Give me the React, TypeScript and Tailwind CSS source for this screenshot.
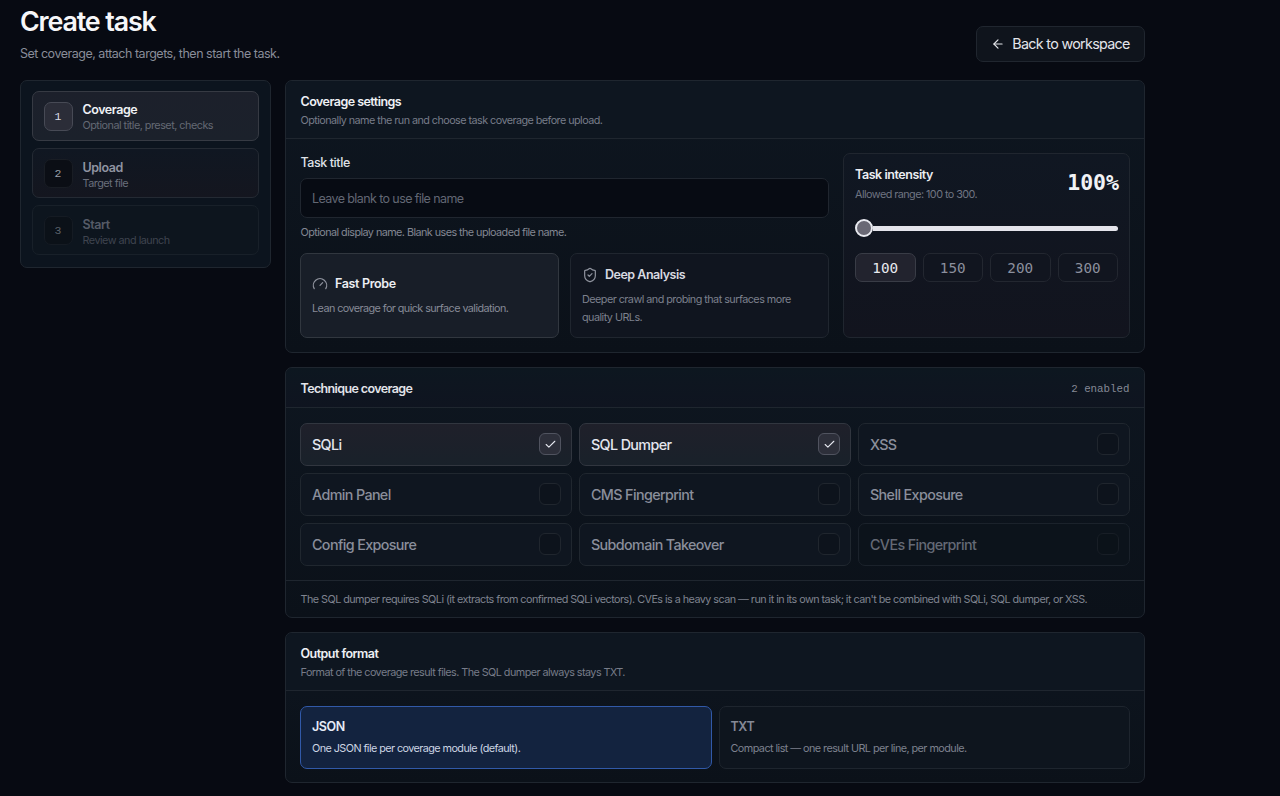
import { ArrowLeft, Check, Gauge, ShieldCheck } from "lucide-react";
import type { ReactNode } from "react";

const steps = [
  {
    n: 1,
    title: "Coverage",
    hint: "Optional title, preset, checks",
    box: "h-[50px] border-[#363a43] bg-linear-to-b from-[#1c202b] to-[#1b212b]",
    badge: "border-[#474a55] bg-[#2b2d38] text-[#d9dbe3]",
    titleColor: "text-[#eff1f5]",
    hintColor: "text-[#646974]",
  },
  {
    n: 2,
    title: "Upload",
    hint: "Target file",
    box: "h-[50px] border-[#242a33] bg-linear-to-b from-[#101722] to-[#14161f] pt-px",
    badge: "border-[#191d24] bg-[#0b0e15] text-[#9a9ea8]",
    titleColor: "text-[#9094a1]",
    hintColor: "text-[#6a6f7c]",
  },
  {
    n: 3,
    title: "Start",
    hint: "Review and launch",
    box: "h-[50px] border-[#182029] bg-[#0d151e] pt-px",
    badge: "border-[#151b23] bg-[#0b1118] text-[#5c616b]",
    titleColor: "text-[#565b67]",
    hintColor: "text-[#3f444f]",
  },
];

const techniques = [
  { name: "SQLi", state: "on" },
  { name: "SQL Dumper", state: "on" },
  { name: "XSS", state: "off" },
  { name: "Admin Panel", state: "off" },
  { name: "CMS Fingerprint", state: "off" },
  { name: "Shell Exposure", state: "off" },
  { name: "Config Exposure", state: "off" },
  { name: "Subdomain Takeover", state: "off" },
  { name: "CVEs Fingerprint", state: "disabled" },
];

const techniqueStyles: Record<string, { box: string; check: string }> = {
  on: {
    box: "border-[#31363f] bg-linear-to-b from-[#1f202a] to-[#19212a] text-[#e4e6ee]",
    check: "border-[#50535f] bg-[#2d2f3a]",
  },
  off: {
    box: "border-[#20272f] bg-[#0f1620] text-[#8a8e9b]",
    check: "border-[#20262e] bg-[#0d131c]",
  },
  disabled: {
    box: "border-[#1b222b] bg-[#0c131b] text-[#646975]",
    check: "border-[#181e26] bg-[#0b1219]",
  },
};

function Panel({ className, children }: { className: string; children: ReactNode }) {
  return (
    <section
      className={`flex flex-col overflow-hidden rounded-[7px] border border-[#1f262f] bg-linear-to-b from-[#0e1620] to-[#0b1119] ${className}`}
    >
      {children}
    </section>
  );
}

function PanelHeader({ title, hint }: { title: string; hint: string }) {
  return (
    <header className="flex h-[58px] shrink-0 flex-col border-b border-[#1f262f] bg-[#0e1620] px-[14.5px] pt-[11.5px]">
      <h2 className="text-[12.5px] leading-[17px] font-semibold tracking-[-0.043em] text-[#eef0f4]">{title}</h2>
      <p className="mt-[3px] text-[10.8px] leading-[16px] tracking-[-0.051em] text-[#777c89]">{hint}</p>
    </header>
  );
}

export default function App() {
  return (
    <div className="h-[796px] w-full overflow-hidden bg-[#070a12] pl-5 font-['Inter',sans-serif] text-white antialiased">
      <div className="w-[1125px]">
        <header className="flex h-20 justify-between">
          <div>
            <h1 className="mt-[5px] text-[26.8px] leading-[32px] font-semibold tracking-[-0.042em] text-[#f6f7f9]">
              Create task
            </h1>
            <p className="mt-[8px] text-[12.5px] leading-[18px] tracking-[-0.039em] text-[#898d99]">
              Set coverage, attach targets, then start the task.
            </p>
          </div>
          <button className="mt-[26px] flex h-9 w-[169px] items-center justify-center gap-[7px] rounded-[7px] border border-[#20262f] bg-[#0f141c] text-[14.3px] tracking-[-0.047em] text-[#e3e5ea]">
            <ArrowLeft size={14} strokeWidth={2} />
            <span>Back to workspace</span>
          </button>
        </header>

        <div className="flex items-start gap-[14px]">
          <aside className="flex h-[188px] w-[251px] flex-col gap-[7px] rounded-[7px] border border-[#1f262f] bg-[#0c141e] px-[11px] pt-[10.4px]">
            {steps.map((s) => (
              <div key={s.n} className={`flex shrink-0 items-center gap-[10px] rounded-[7px] border pl-[10.5px] ${s.box}`}>
                <span
                  className={`flex size-[29px] items-center justify-center rounded-[7px] border font-['Liberation_Mono',monospace] text-[11.5px] ${s.badge}`}
                >
                  {s.n}
                </span>
                <div className="pt-[2.5px]">
                  <div className={`text-[12.5px] leading-[16px] font-semibold tracking-[-0.036em] ${s.titleColor}`}>{s.title}</div>
                  <div className={`text-[10.8px] leading-[15px] tracking-[-0.046em] ${s.hintColor}`}>{s.hint}</div>
                </div>
              </div>
            ))}
          </aside>

          <main className="flex w-[860px] flex-col gap-[14px]">
            <Panel className="h-[273px]">
              <PanelHeader title="Coverage settings" hint="Optionally name the run and choose task coverage before upload." />
              <div className="flex gap-[14px] px-[14px] pt-[14px]">
                <div className="flex w-[529px] flex-col">
                  <label className="mt-px pl-[0.5px] text-[12.5px] leading-[17px] font-medium tracking-[-0.034em] text-[#dfe1e7]">Task title</label>
                  <div className="mt-[7px] flex h-10 items-center rounded-[7px] border border-[#20262f] bg-[#070b13] px-[11px] pt-[2px] text-[12.5px] tracking-[-0.048em] text-[#626773]">
                    Leave blank to use file name
                  </div>
                  <p className="mt-[7px] pl-[0.5px] text-[10.8px] leading-[16px] tracking-[-0.051em] text-[#838793]">
                    Optional display name. Blank uses the uploaded file name.
                  </p>
                  <div className="mt-[12px] flex gap-[11px]">
                    <div className="flex h-[85px] w-[259px] flex-col justify-center rounded-[7px] border border-[#31373f] bg-[#181e28] px-[11px] pt-px">
                      <div className="flex items-center gap-[7px] text-[12.5px] leading-[18px] font-semibold tracking-[-0.028em] text-[#eceef3]">
                        <Gauge size={16} strokeWidth={1.8} className="text-[#8f939e]" />
                        Fast Probe
                      </div>
                      <p className="mt-[7px] text-[10.8px] leading-[18px] tracking-[-0.052em] text-[#868a97]">
                        Lean coverage for quick surface validation.
                      </p>
                    </div>
                    <div className="flex h-[85px] w-[259px] flex-col justify-center rounded-[7px] border border-[#20262f] bg-[#10151f] px-[11px] pt-px">
                      <div className="flex items-center gap-[7px] text-[12.5px] leading-[18px] font-semibold tracking-[-0.039em] text-[#d8dae1]">
                        <ShieldCheck size={16} strokeWidth={1.8} className="text-[#8f939e]" />
                        Deep Analysis
                      </div>
                      <p className="mt-[7px] text-[10.8px] leading-[18px] tracking-[-0.049em] text-[#7c808d]">
                        Deeper crawl and probing that surfaces more
                        <br />
                        quality URLs.
                      </p>
                    </div>
                  </div>
                </div>

                <div className="h-[185px] w-[287px] rounded-[7px] border border-[#20262f] bg-linear-to-b from-[#101722] to-[#12141e] px-[11px]">
                  <div className="flex items-start justify-between">
                    <div className="pt-[12px]">
                      <div className="text-[12.5px] leading-[17px] font-semibold tracking-[-0.035em] text-[#eceef3]">Task intensity</div>
                      <div className="mt-[4px] text-[10.8px] leading-[15px] tracking-[-0.05em] text-[#6f7481]">Allowed range: 100 to 300.</div>
                    </div>
                    <div className="mt-[15px] -mr-px font-['DejaVu_Sans_Mono',monospace] text-[21.5px] leading-[27px] font-bold text-[#f1f2f5]">100%</div>
                  </div>
                  <div className="mt-[17px] flex h-[18px] items-center">
                    <span className="size-[18px] shrink-0 rounded-full border-2 border-[#e9eaf0] bg-[#6a6975]" />
                    <span className="h-[5px] grow rounded-r-full bg-[#e4e4eb]" />
                  </div>
                  <div className="mt-[16px] grid grid-cols-4 gap-[7px]">
                    {[100, 150, 200, 300].map((v) => (
                      <span
                        key={v}
                        className={`flex h-[29px] items-center justify-center rounded-[7px] border pt-[2px] font-['DejaVu_Sans_Mono',monospace] text-[14.3px] ${
                          v === 100 ? "border-[#393c46] bg-[#22232e] text-[#e8e9ee]" : "border-[#232730] bg-[#11151f] text-[#8b8f9d]"
                        }`}
                      >
                        {v}
                      </span>
                    ))}
                  </div>
                </div>
              </div>
            </Panel>

            <Panel className="h-[251px]">
              <header className="flex h-[40px] shrink-0 items-center justify-between border-b border-[#1f262f] bg-linear-to-b from-[#0d1720] to-[#0f1420] px-[14.5px] pt-[3px]">
                <h2 className="text-[12.5px] font-semibold tracking-[-0.05em] text-[#e2e4ea]">Technique coverage</h2>
                <span className="font-['Liberation_Mono',monospace] text-[10.8px] text-[#858996]">2 enabled</span>
              </header>
              <div className="grid grid-cols-3 gap-[7px] px-[14px] pt-[14.5px]">
                {techniques.map((t) => (
                  <div
                    key={t.name}
                    className={`flex h-[43px] items-center justify-between rounded-[7px] border pr-[10px] pl-[11px] text-[14.3px] font-medium tracking-[-0.043em] ${techniqueStyles[t.state].box}`}
                  >
                    <span className="pt-px">{t.name}</span>
                    <span className={`flex size-[22px] items-center justify-center rounded-[6px] border ${techniqueStyles[t.state].check}`}>
                      {t.state === "on" && <Check size={13} strokeWidth={2} />}
                    </span>
                  </div>
                ))}
              </div>
              <footer className="mt-[14.5px] flex h-[38px] items-center border-t border-[#1f262f] px-[14.5px] pt-[2px] text-[10.8px] tracking-[-0.05em] whitespace-nowrap text-[#7f838f]">
                The SQL dumper requires SQLi (it extracts from confirmed SQLi vectors). CVEs is a heavy scan — run it in its own task; it can't be combined with SQLi, SQL dumper, or XSS.
              </footer>
            </Panel>

            <Panel className="h-[151px]">
              <PanelHeader title="Output format" hint="Format of the coverage result files. The SQL dumper always stays TXT." />
              <div className="grid grid-cols-2 gap-[7px] px-[14px] pt-[14.5px]">
                <div className="flex h-[63px] flex-col rounded-[7px] border border-[#3159a8] bg-[#13233f] px-[11px] pt-[11.5px]">
                  <div className="text-[12.5px] leading-[18px] font-semibold tracking-[-0.034em] text-[#e6ecf6]">JSON</div>
                  <div className="mt-[4px] text-[10.8px] leading-[18px] tracking-[-0.052em] text-[#ccd5e3]">One JSON file per coverage module (default).</div>
                </div>
                <div className="flex h-[63px] flex-col rounded-[7px] border border-[#1e252e] bg-[#0e151e] px-[11px] pt-[11.5px]">
                  <div className="text-[12.5px] leading-[18px] font-semibold tracking-[-0.034em] text-[#858996]">TXT</div>
                  <div className="mt-[4px] text-[10.8px] leading-[18px] tracking-[-0.05em] text-[#7d818e]">
                    Compact list — one result URL per line, per module.
                  </div>
                </div>
              </div>
            </Panel>
          </main>
        </div>
      </div>
    </div>
  );
}
